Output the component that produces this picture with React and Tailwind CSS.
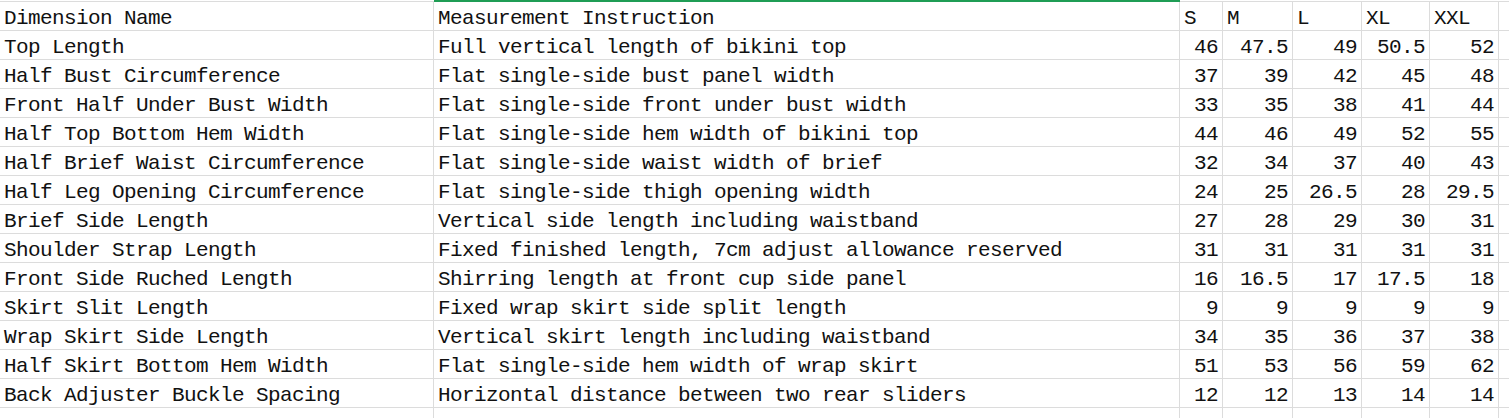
import React from 'react';

const sizes = ['S', 'M', 'L', 'XL', 'XXL'];

const rows = [
  ['Top Length', 'Full vertical length of bikini top', ['46', '47.5', '49', '50.5', '52']],
  ['Half Bust Circumference', 'Flat single-side bust panel width', ['37', '39', '42', '45', '48']],
  ['Front Half Under Bust Width', 'Flat single-side front under bust width', ['33', '35', '38', '41', '44']],
  ['Half Top Bottom Hem Width', 'Flat single-side hem width of bikini top', ['44', '46', '49', '52', '55']],
  ['Half Brief Waist Circumference', 'Flat single-side waist width of brief', ['32', '34', '37', '40', '43']],
  ['Half Leg Opening Circumference', 'Flat single-side thigh opening width', ['24', '25', '26.5', '28', '29.5']],
  ['Brief Side Length', 'Vertical side length including waistband', ['27', '28', '29', '30', '31']],
  ['Shoulder Strap Length', 'Fixed finished length, 7cm adjust allowance reserved', ['31', '31', '31', '31', '31']],
  ['Front Side Ruched Length', 'Shirring length at front cup side panel', ['16', '16.5', '17', '17.5', '18']],
  ['Skirt Slit Length', 'Fixed wrap skirt side split length', ['9', '9', '9', '9', '9']],
  ['Wrap Skirt Side Length', 'Vertical skirt length including waistband', ['34', '35', '36', '37', '38']],
  ['Half Skirt Bottom Hem Width', 'Flat single-side hem width of wrap skirt', ['51', '53', '56', '59', '62']],
  ['Back Adjuster Buckle Spacing', 'Horizontal distance between two rear sliders', ['12', '12', '13', '14', '14']],
];

const cols = 'grid grid-cols-[434px_746px_43px_70px_69px_68px_69px_1fr]';
const cell = 'h-[29px] border-r border-b border-[#dcdcdc] flex items-end pb-px px-[4px] whitespace-nowrap overflow-visible leading-none tracking-[-0.6px]';

const App = () => {
  return (
    <div
      className="w-[1509px] h-[418px] overflow-hidden bg-white text-[#111] text-[21px]"
      style={{ fontFamily: '"Liberation Mono", "Courier New", monospace' }}
    >
      {/* selection strip above column B */}
      <div className={cols}>
        <div className="h-[2px] border-b border-[#dcdcdc]" />
        <div className="h-[2px] bg-[#1f9d55]" />
        {[0, 1, 2, 3, 4, 5].map((i) => (
          <div key={i} className="h-[2px] border-b border-[#dcdcdc]" />
        ))}
      </div>

      <div className={cols}>
        <div className={`${cell} h-[28px]`}>Dimension Name</div>
        <div className={`${cell} h-[28px]`}>Measurement Instruction</div>
        {sizes.map((s) => (
          <div key={s} className={`${cell} h-[28px]`}>{s}</div>
        ))}
        <div className={`${cell} h-[28px] border-r-0`} />

        {rows.map(([name, text, vals]) => (
          <React.Fragment key={name}>
            <div className={cell}>{name}</div>
            <div className={cell}>{text}</div>
            {vals.map((v, i) => (
              <div key={i} className={`${cell} justify-end`}>{v}</div>
            ))}
            <div className={`${cell} border-r-0`} />
          </React.Fragment>
        ))}

        {[0, 1, 2, 3, 4, 5, 6].map((i) => (
          <div key={i} className={cell} />
        ))}
        <div className={`${cell} border-r-0`} />
      </div>
    </div>
  );
};

export default App;
